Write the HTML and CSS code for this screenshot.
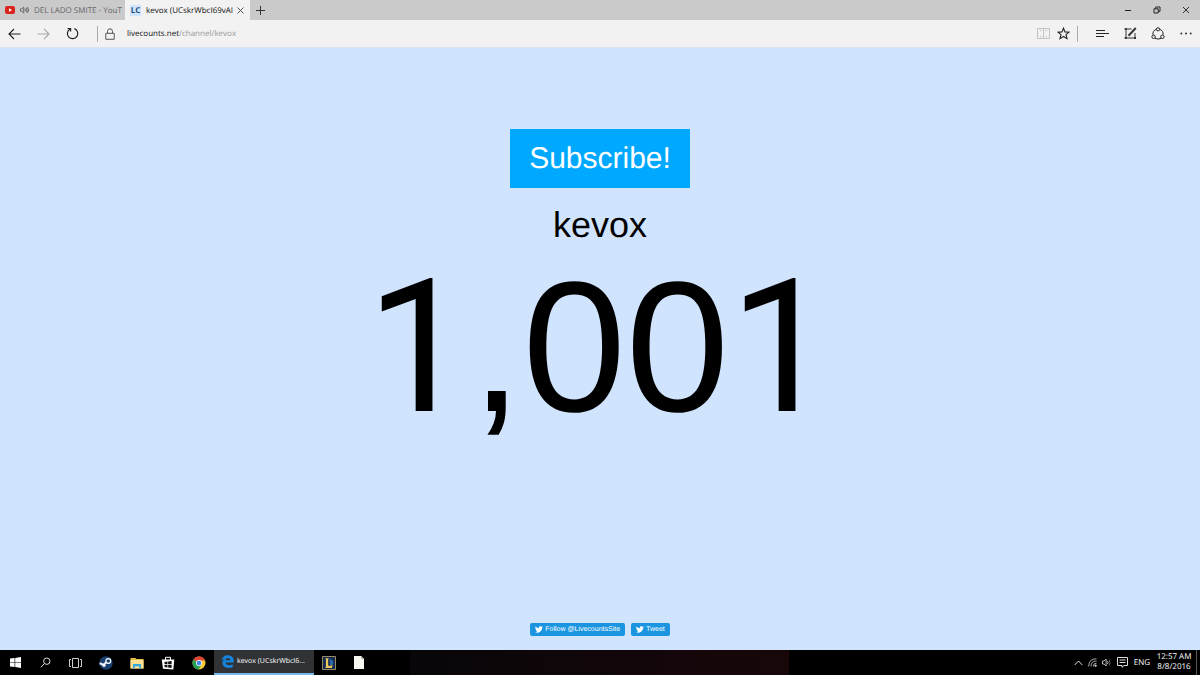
FILE: index.html
```
<!DOCTYPE html>
<html lang="en">
<head>
    <meta charset="UTF-8">
    <meta name="viewport" content="width=device-width, initial-scale=1.0">
    <title>kevox - Livecounts</title>
    <link rel="stylesheet" href="styles.css">
</head>
<body>
    <!-- tabs -->
    <header class="tab-bar">
        <button class="tab tab-muted">
            <svg class="tab-icon" width="10" height="8" viewBox="0 0 10 8"><rect width="10" height="8" rx="2" fill="#d9251d"/><path d="M4 2.2v3.6L7 4z" fill="#fff"/></svg>
            <svg class="tab-sound" width="9" height="8" viewBox="0 0 9 8" fill="none" stroke="#555" stroke-width=".8"><path d="M.5 2.8h1.3L3.7 1v6L1.8 5.2H.5z"/><path d="M5 2.6q1 1.4 0 2.8M6.3 1.8q1.7 2.2 0 4.4M7.4 1q2.4 3 0 6"/></svg>
            <span class="tab-title">DEL LADO SMITE - YouT</span>
        </button>
        <div class="tab tab-active">
            <span class="favicon">LC</span>
            <span class="tab-title">kevox (UCskrWbcI69vAI</span>
            <button class="icon-button tab-close" aria-label="Close tab"><svg width="7" height="7" viewBox="0 0 7 7" stroke="#444" stroke-width=".9"><path d="M.5.5l6 6M6.5.5l-6 6"/></svg></button>
        </div>
        <button class="icon-button new-tab" aria-label="New tab"><svg width="9" height="9" viewBox="0 0 9 9" stroke="#333"><path d="M4.5 0v9M0 4.5h9"/></svg></button>
        <div class="window-buttons">
            <button class="icon-button" aria-label="Minimize"><svg width="8" height="8" viewBox="0 0 8 8" stroke="#222"><path d="M1 4.5h6"/></svg></button>
            <button class="icon-button" aria-label="Restore"><svg width="8" height="8" viewBox="0 0 8 8" fill="none" stroke="#222"><path d="M1 2.8h4.2V7H1zM2.7 2.5V1H7v4.3H5.4"/></svg></button>
            <button class="icon-button" aria-label="Close"><svg width="8" height="8" viewBox="0 0 8 8" stroke="#222" stroke-width=".9"><path d="M1 1l6 6M7 1L1 7"/></svg></button>
        </div>
    </header>

    <!-- address bar -->
    <nav class="toolbar">
        <button class="icon-button" aria-label="Back"><svg width="13" height="12" viewBox="0 0 13 12" fill="none" stroke="#222" stroke-width="1.1"><path d="M12.5 6H1M6 1L1 6l5 5"/></svg></button>
        <button class="icon-button" aria-label="Forward"><svg width="13" height="12" viewBox="0 0 13 12" fill="none" stroke="#aaa" stroke-width="1.1"><path d="M.5 6H12M7 1l5 5-5 5"/></svg></button>
        <button class="icon-button" aria-label="Refresh"><svg width="13" height="13" viewBox="0 0 13 13" fill="none" stroke="#222" stroke-width="1.2"><path d="M8.3 1.6A5.2 5.2 0 1 1 4 2M1.6 1.5h3v3"/></svg></button>
        <span class="divider"></span>
        <svg class="lock" width="10" height="12" viewBox="0 0 10 12" fill="none" stroke="#555"><path d="M.8 5.3h8.4v6H.8zM2.5 5V3.3a2.5 2.5 0 0 1 5 0V5"/></svg>
        <a class="address" href="#">livecounts.net<span>/channel/kevox</span></a>
        <button class="icon-button reading" aria-label="Reading view"><svg width="13" height="11" viewBox="0 0 13 11" fill="none" stroke="#c2c2c2"><path d="M.5.5h12v10H.5zM6.5.5v10M3 2.500h1.500M3 8.500h1.500M8.500 2.500H10M8.500 8.500H10"/></svg></button>
        <button class="icon-button star" aria-label="Favorites"><svg width="13" height="13" viewBox="0 0 13 13" fill="none" stroke="#222" stroke-width="1.1"><path d="M6.500 1.200L8 4.900l4 .3L9 7.700l1 3.900-3.500-2.100L3 11.600l1-3.900-3-2.500 4-.3z"/></svg></button>
        <span class="divider divider-right"></span>
        <button class="icon-button tool" aria-label="Hub"><svg width="13" height="9" viewBox="0 0 13 9" stroke="#222"><path d="M0 1.500h9M0 4.500h13M0 7.500h8"/></svg></button>
        <button class="icon-button tool" aria-label="Make a web note"><svg width="13" height="13" viewBox="0 0 13 13" fill="none" stroke="#333"><path d="M7.500 2H2v9h9V6"/><path d="M4.500 8.800L11.800 1" stroke-width="2"/><path d="M.7 1h2v2h-2zM.7 10h2v2h-2zM10 10h2v2h-2z" fill="#333" stroke="none"/></svg></button>
        <button class="icon-button tool" aria-label="Share"><svg width="14" height="13" viewBox="0 0 14 13" fill="none" stroke="#222"><path d="M5.300 2.300A5 5 0 0 0 2 7.800M8.700 2.300A5 5 0 0 1 12 7.800M4 11.300q3 1.600 6 0"/><circle cx="7" cy="2.300" r="1.600"/><circle cx="2.600" cy="9.800" r="1.700"/><circle cx="11.400" cy="9.800" r="1.700"/></svg></button>
        <button class="icon-button tool" aria-label="More"><svg width="12" height="3" viewBox="0 0 12 3" fill="#222"><circle cx="1.300" cy="1.500" r=".9"/><circle cx="6" cy="1.500" r=".9"/><circle cx="10.700" cy="1.500" r=".9"/></svg></button>
    </nav>

    <main class="counter">
        <button class="subscribe">Subscribe!</button>
        <h1 class="channel">kevox</h1>
        <p class="count"><span class="one">1</span>,00<span class="one">1</span></p>
        <footer class="social">
            <a class="twitter-button" href="#"><svg width="8" height="7" viewBox="0 0 24 20" fill="#fff"><path d="M24 2.400a10 10 0 0 1-2.800.8A5 5 0 0 0 23.300.4a10 10 0 0 1-3.100 1.200A4.900 4.900 0 0 0 11.800 6 14 14 0 0 1 1.700.9a4.900 4.900 0 0 0 1.500 6.600A5 5 0 0 1 1 6.900a5 5 0 0 0 3.900 4.900 5 5 0 0 1-2.200.1 4.900 4.900 0 0 0 4.600 3.400A10 10 0 0 1 0 17.400 14 14 0 0 0 21.500 5z"/></svg>Follow @LivecountsSite</a>
            <a class="twitter-button" href="#"><svg width="8" height="7" viewBox="0 0 24 20" fill="#fff"><path d="M24 2.400a10 10 0 0 1-2.800.8A5 5 0 0 0 23.300.4a10 10 0 0 1-3.100 1.200A4.900 4.900 0 0 0 11.800 6 14 14 0 0 1 1.700.9a4.900 4.900 0 0 0 1.500 6.600A5 5 0 0 1 1 6.900a5 5 0 0 0 3.900 4.900 5 5 0 0 1-2.200.1 4.900 4.900 0 0 0 4.600 3.400A10 10 0 0 1 0 17.400 14 14 0 0 0 21.500 5z"/></svg>Tweet</a>
        </footer>
    </main>

    <!-- windows taskbar -->
    <footer class="taskbar">
        <button class="task" aria-label="Start"><svg width="11" height="11" viewBox="0 0 11 11" fill="#fff"><path d="M0 1.600L4.600 1v4.200H0zM5.200.9L11 0v5.200H5.200zM0 5.800h4.600V10L0 9.400zM5.200 5.800H11V11l-5.800-.9z"/></svg></button>
        <button class="task" aria-label="Search"><svg width="11" height="11" viewBox="0 0 11 11" fill="none" stroke="#ddd"><circle cx="6.800" cy="4.200" r="3.200"/><path d="M4.500 6.500L.8 10.300"/></svg></button>
        <button class="task" aria-label="Task view"><svg width="13" height="10" viewBox="0 0 13 10" fill="none" stroke="#ccc"><path d="M3.500.5h6v9h-6zM2 1.500H.5v7H2M11 1.500h1.500v7H11"/></svg></button>
        <button class="task task-app" aria-label="Steam"><svg width="14" height="14" viewBox="0 0 14 14"><circle cx="7" cy="7" r="6.700" fill="#173f70"/><path d="M.6 7.200l4.200 1.600 3-3.300" fill="none" stroke="#e6edf5" stroke-width="2"/><circle cx="9.300" cy="5" r="2.400" fill="#173f70" stroke="#fff" stroke-width="1.200"/><circle cx="5" cy="9.300" r="1.600" fill="#fff"/></svg></button>
        <button class="task task-app" aria-label="File Explorer"><svg width="14" height="12" viewBox="0 0 14 12"><path d="M.5 1h5l1 1h7v9.500H.5z" fill="#e9bd4c"/><path d="M.5 3h13v8.500H.5z" fill="#fbe293"/><path d="M3 11.500V7h8v4.500H9.300V9.200H4.700v2.300z" fill="#2fa8e0"/></svg></button>
        <button class="task task-app" aria-label="Store"><svg width="14" height="14" viewBox="0 0 14 14"><path d="M4.500 4V1.300h5V4" fill="none" stroke="#fff"/><path d="M.7 3.600h12.600l-1 9.900L2 12.800z" fill="#fff"/><path d="M3.500 6l3-.4v2.700h-3zM7.100 5.500l3.500-.4v3.200H7.100zM3.500 8.900h3v2.600l-3-.4zM7.100 8.900h3.500V12l-3.500-.4z" fill="#111"/></svg></button>
        <button class="task task-app" aria-label="Chrome"><svg width="14" height="14" viewBox="0 0 14 14"><circle cx="7" cy="7" r="6.500" fill="#f7cb35"/><path d="M7 7L1.300 3.800A6.500 6.500 0 0 1 13 4.500H7z" fill="#e04437"/><path d="M7 7L1.300 3.800A6.500 6.500 0 0 0 6.500 13.500L9.500 8.500z" fill="#28a058"/><circle cx="7" cy="7" r="3" fill="#fff"/><circle cx="7" cy="7" r="2.300" fill="#3c80ec"/></svg></button>
        <button class="task-open"><svg width="13" height="13" viewBox="0 0 13 13" fill="#1683dc"><path d="M.3 6C1 2 3.600.2 6.800.2c4 0 6 2.900 6 6v1.400H4.500c.2 2 1.700 2.700 3.500 2.700 1.500 0 2.700-.4 3.800-1v2.700c-1.200.6-2.700.9-4.300.9-3.800 0-6-2.200-6-5.200 0-2 1-3.600 2.700-4.500C2.500 3.700 1.200 4.600.3 6zm4.200-.7h4.700c0-1.500-.8-2.300-2.200-2.300S4.700 3.900 4.500 5.300z"/></svg><span>kevox (UCskrWbcI6...</span></button>
        <button class="task" aria-label="League of Legends"><svg width="14" height="14" viewBox="0 0 14 14"><path d="M.5.5h13v13H.5z" fill="#122950" stroke="#9c8a64"/><path d="M7.500 2.500q5 1.500 3.500 6l-3 1z" fill="#2867a8"/><path d="M3 2.200h4L6.200 3v6.700h2.900l1.600-1.200-.8 3.500H3l.9-1V3z" fill="#edc65b"/></svg></button>
        <button class="task" aria-label="Document"><svg width="10" height="13" viewBox="0 0 10 13"><path d="M0 0h7l3 3v10H0z" fill="#f7f7f2"/><path d="M7 0v3h3" fill="#bbb"/></svg></button>
        <div class="taskbar-space"></div>
        <div class="tray">
            <svg width="9" height="6" viewBox="0 0 9 6" fill="none" stroke="#ddd"><path d="M.7 5l3.800-4 3.800 4"/></svg>
            <svg width="9" height="9" viewBox="0 0 9 9" fill="none" stroke="#bbb" stroke-width=".9"><path d="M.7 8.500Q.7.800 8.500.8M3 8.500Q3 3 8.500 3M5.200 8.500q0-3.300 3.300-3.300"/><circle cx="7.600" cy="7.700" r=".8" fill="#fff"/></svg>
            <svg width="9" height="9" viewBox="0 0 9 9" fill="none" stroke="#ccc" stroke-width=".9"><path d="M.5 3h1.600l2-2v7l-2-2H.5z"/><path d="M5.500 3q1 1.500 0 3"/><path d="M7 1.500q2.200 3 0 6" stroke="#777"/></svg>
            <svg class="notes" width="11" height="11" viewBox="0 0 11 11" fill="none" stroke="#ddd"><path d="M.5.5h10v8H7L5 10.300V8.500H.5zM2.500 3h6M2.500 5.500h6"/></svg>
            <span class="language">ENG</span>
            <time class="clock">12:57 AM<br>8/8/2016</time>
        </div>
    </footer>
</body>
</html>
```
FILE: styles.css
```
* {
    box-sizing: border-box;
}

body {
    margin: 0;
    min-height: 100vh;
    display: flex;
    flex-direction: column;
    font-family: "Open Sans", "Noto Sans", sans-serif;
    font-size: 8px;
    line-height: 11px;
    text-rendering: geometricPrecision;
    color: #222;
    background: #d0e4fe;
}

button {
    font: inherit;
    color: inherit;
    text-rendering: inherit;
    border: 0;
    padding: 0;
    background: none;
}

a {
    text-decoration: none;
}

svg {
    display: block;
    flex-shrink: 0;
}

.icon-button {
    display: flex;
    align-items: center;
    justify-content: center;
    flex-shrink: 0;
}

/* tabs */
.tab-bar {
    display: flex;
    height: 20px;
    background: #cacaca;
}

.tab {
    display: flex;
    align-items: center;
    width: 125px;
    padding: 0 5px;
    text-align: left;
}

.tab-muted {
    color: #666;
}

.tab-sound {
    margin: 0 5px;
}

.tab-active {
    background: #f2f2f2;
    color: #111;
}

.tab-title {
    flex: 1;
    white-space: nowrap;
}

.favicon {
    width: 11px;
    margin-right: 5px;
    background: #d0e4fe;
    color: #24507c;
    font-weight: bold;
    text-align: center;
}

.tab-close {
    width: 10px;
}

.new-tab {
    width: 20px;
}

.window-buttons {
    display: flex;
    margin-left: auto;
}

.window-buttons .icon-button {
    width: 29px;
}

/* address bar */
.toolbar {
    display: flex;
    align-items: center;
    height: 28px;
    background: #f2f2f2;
    border-bottom: 1px solid #dce4ee;
}

.toolbar .icon-button {
    width: 29px;
    height: 28px;
}

.divider {
    width: 1px;
    height: 16px;
    margin: 0 7px 0 10px;
    background: #aaa;
}

.divider-right {
    margin: 0 10px 0 4px;
}

.lock {
    margin-right: 12px;
}

.address {
    flex: 1;
    color: #111;
}

.address span {
    color: #999;
}

.toolbar .reading,
.toolbar .star {
    width: 20px;
}

.toolbar .tool {
    width: 28px;
}

/* counter */
.counter {
    flex: 1;
    display: flex;
    flex-direction: column;
    align-items: center;
    padding: 81px 0 14px;
    font-family: "Liberation Sans", Arial, sans-serif;
    color: #000;
}

.subscribe {
    padding: 12px 19px;
    background: #00a8ff;
    color: #fff;
    font-size: 30px;
    line-height: 35px;
}

.channel {
    margin: 16px 0 0;
    font-size: 36px;
    line-height: 42px;
    font-weight: normal;
}

.count {
    margin: 0;
    font-size: 186px;
    line-height: 204px;
}

/* plain figure one, without a foot */
.one {
    font-family: Roboto, Arial, sans-serif;
}

.social {
    display: flex;
    gap: 6px;
    margin-top: auto;
}

.twitter-button {
    display: flex;
    align-items: center;
    gap: 2px;
    height: 13px;
    padding: 0 5px;
    border-radius: 2px;
    background: #1b95e0;
    color: #fff;
    font-size: 7px;
}

/* taskbar */
.taskbar {
    display: flex;
    height: 25px;
    background: #000;
    color: #fff;
}

.task {
    display: flex;
    align-items: center;
    justify-content: center;
    width: 30px;
}

.task-app {
    width: 31px;
}

.task-open {
    display: flex;
    align-items: center;
    gap: 3px;
    width: 100px;
    padding: 0 7px;
    background: #303235;
    border-bottom: 2px solid #76b9ed;
    font-size: 7px;
    white-space: nowrap;
}

.taskbar-space {
    flex: 1;
    margin: 0 285px 0 36px;
    background: linear-gradient(to right, #080609, #14060a 70%, #170709);
}

.tray {
    display: flex;
    align-items: center;
    gap: 5px;
    padding-right: 3px;
}

.notes {
    margin: 0 1px;
}

.clock {
    width: 42px;
    height: 25px;
    padding: 2px 3px 0 0;
    border-right: 1px solid #555;
    line-height: 10px;
    text-align: center;
    white-space: nowrap;
}
```
